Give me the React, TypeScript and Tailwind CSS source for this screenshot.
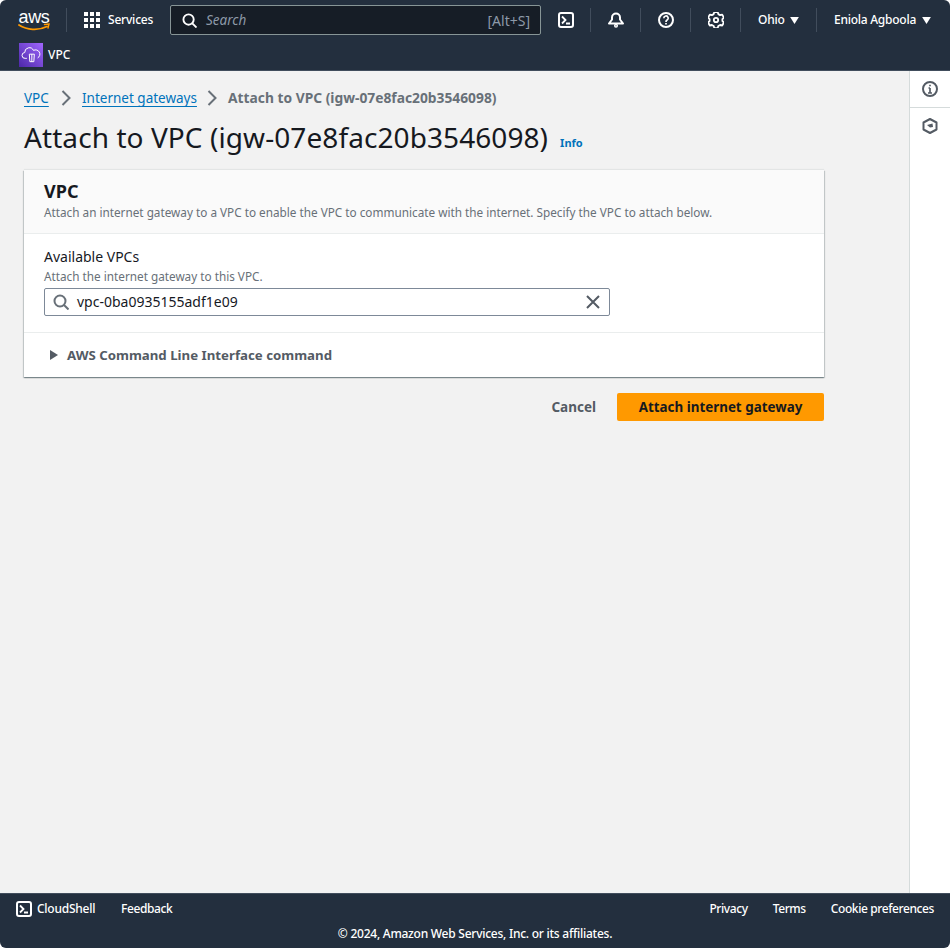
const font = "font-['Noto_Sans','Open_Sans',sans-serif]";

function Caret({ className = "" }: { className?: string }) {
  return (
    <svg viewBox="0 0 10 8" className={`w-[9px] h-[7px] ${className}`} fill="currentColor">
      <path d="M0 0h10L5 8z" />
    </svg>
  );
}

function Divider() {
  return <div className="w-px h-[24px] bg-[#414d5c]" />;
}

function ShellIcon({ size = 16 }: { size?: number }) {
  return (
    <svg width={size} height={size} viewBox="0 0 16 16" fill="none" stroke="currentColor" strokeWidth="2">
      <rect x="1" y="1" width="14" height="14" rx="2" />
      <path d="M4 4.500 7.500 8 4 11.500M8 11.500h4" strokeWidth="1.800" />
    </svg>
  );
}

function SearchIcon({ className = "" }: { className?: string }) {
  return (
    <svg viewBox="0 0 16 16" className={className} fill="none" stroke="currentColor" strokeWidth="2">
      <circle cx="7" cy="7" r="5.500" />
      <path d="m11 11 4.500 4.500" />
    </svg>
  );
}

function Crumb() {
  return (
    <svg viewBox="0 0 10 16" className="w-[10px] h-[16px] mx-[11px] text-[#687078]" fill="none" stroke="currentColor" strokeWidth="2">
      <path d="m1.500 1 7 7-7 7" />
    </svg>
  );
}

function Header() {
  return (
    <header className="h-[71px] shrink-0 bg-[#232f3e] text-white border-b border-[#414d5c]">
      <div className="h-[40px] flex items-center">
        <div className="ml-[18px] w-[32px] flex flex-col items-center">
          <span className="text-[18px] leading-[14px] font-['Liberation_Sans',sans-serif] tracking-[-0.3px]">aws</span>
          <svg viewBox="0 0 32 8" className="w-[32px] h-[8px] -mt-px" fill="none">
            <path d="M1 2c8 5 19 6 28 1.500" stroke="#ff9900" strokeWidth="1.800" strokeLinecap="round" />
            <path d="M26.500 1.500 31 1l-1 4" stroke="#ff9900" strokeWidth="1.400" strokeLinecap="round" />
          </svg>
        </div>
        <div className="ml-[16px]"><Divider /></div>
        <div className="ml-[17px] grid grid-cols-3 gap-[2px] w-[16px]">
          {Array.from({ length: 9 }).map((_, i) => (
            <span key={i} className="w-[4px] h-[4px] bg-white block" />
          ))}
        </div>
        <span className="ml-[8px] w-[45px] text-[12px] tracking-[-0.2px] font-medium whitespace-nowrap">Services</span>
        <div className="ml-[17px] w-[371px] h-[30px] flex items-center border border-[#879596] bg-[#161d26] rounded-[2px] pl-[11px] pr-[10px]">
          <SearchIcon className="w-[15px] h-[15px] text-white" />
          <span className="ml-[9px] text-[13.500px] italic text-[#8d99a8]">Search</span>
          <span className="ml-auto text-[14px] text-[#8d99a8]">[Alt+S]</span>
        </div>
        <div className="ml-[17px] w-[16px] h-[16px]"><ShellIcon /></div>
        <div className="ml-[16px]"><Divider /></div>
        <svg viewBox="0 0 16 16" className="ml-[17px] w-[16px] h-[16px]" fill="none" stroke="currentColor" strokeWidth="2">
          <path d="M1 11.500h14L12 7.500V5.500a4 4 0 0 0-8 0v2z" strokeLinejoin="round" />
          <circle cx="8" cy="13.800" r="1.300" strokeWidth="1.500" />
        </svg>
        <div className="ml-[16px]"><Divider /></div>
        <svg viewBox="0 0 16 16" className="ml-[17px] w-[16px] h-[16px]" fill="none" stroke="currentColor" strokeWidth="2">
          <circle cx="8" cy="8" r="7" />
          <path d="M5.800 6.200a2.200 2.200 0 1 1 3.300 1.900C8.400 8.500 8 9 8 10M8 11v1.500" strokeWidth="1.700" />
        </svg>
        <div className="ml-[16px]"><Divider /></div>
        <svg viewBox="0 0 16 16" className="ml-[17px] w-[16px] h-[16px]" fill="none" stroke="currentColor" strokeWidth="1.800">
          <path d="M6.300.900h3.400l.6 2.100 1.800 1 2.100-.5 1.700 3-1.500 1.500v1.900l1.500 1.500-1.700 3-2.100-.5-1.800 1-.6 2.100H6.300l-.6-2.100-1.800-1-2.100.5-1.700-3L1.600 9.900V8L.1 6.500l1.700-3 2.100.5 1.800-1z" strokeLinejoin="round" transform="translate(0 -.900)" />
          <circle cx="8" cy="8" r="2.200" />
        </svg>
        <div className="ml-[16px]"><Divider /></div>
        <span className="ml-[17px] w-[26px] text-[12px] tracking-[-0.2px] font-medium">Ohio</span>
        <Caret className="ml-[6px]" />
        <div className="ml-[17px]"><Divider /></div>
        <span className="ml-[17px] w-[82px] text-[12px] tracking-[-0.25px] font-medium whitespace-nowrap">Eniola Agboola</span>
        <Caret className="ml-[6px]" />
      </div>
      <div className="h-[30px] flex items-center pl-[19px]">
        <div className="w-[24px] h-[24px] bg-gradient-to-tr from-[#4d27a8] to-[#a166ff] flex items-center justify-center">
          <svg viewBox="0 0 24 24" className="w-[20px] h-[20px]" fill="none" stroke="white" strokeWidth="1.200">
            <path d="M7 16H5a3.500 3.500 0 0 1-.5-7A5.500 5.500 0 0 1 15 6.500 4.500 4.500 0 0 1 20 15.500" />
            <path d="M10 11h6l-.6 9h-4.800zM13 11v9" />
          </svg>
        </div>
        <span className="ml-[5px] text-[12px] font-medium">VPC</span>
      </div>
    </header>
  );
}

function Breadcrumbs() {
  return (
    <nav className="flex items-center h-[24px] text-[13.500px] mt-[15px]">
      <a className="w-[26px] text-[#0073bb] underline underline-offset-[3px]">VPC</a>
      <Crumb />
      <a className="w-[114px] whitespace-nowrap text-[#0073bb] underline underline-offset-[3px]">Internet gateways</a>
      <Crumb />
      <span className="font-bold text-[#687078] text-[13.800px]">Attach to VPC (igw-07e8fac20b3546098)</span>
    </nav>
  );
}

function Card() {
  return (
    <section className="w-[800px] mt-[13px] bg-white shadow-[0_1px_1px_0_rgba(0,28,36,0.3),1px_1px_1px_0_rgba(0,28,36,0.15),-1px_1px_1px_0_rgba(0,28,36,0.15),0_-1px_1px_0_rgba(0,28,36,0.06)]">
      <div className="h-[64px] bg-[#fafafa] border-b border-[#eaeded] px-[20px] pt-[9px]">
        <h2 className="text-[18px] leading-[24px] font-bold text-[#16191f]">VPC</h2>
        <p className="text-[11.750px] leading-[16px] mt-[1px] text-[#687078] whitespace-nowrap">
          Attach an internet gateway to a VPC to enable the VPC to communicate with the internet. Specify the VPC to attach below.
        </p>
      </div>
      <div className="h-[99px] border-b border-[#eaeded] px-[20px] pt-[13px]">
        <div className="text-[14px] leading-[20px] text-[#16191f]">Available VPCs</div>
        <div className="text-[11.750px] leading-[16px] text-[#687078] mt-[1px]">Attach the internet gateway to this VPC.</div>
        <div className="mt-[4px] w-[566px] h-[28px] border border-[#7d8998] rounded-[2px] flex items-center pl-[8px] pr-[8px]">
          <SearchIcon className="w-[16px] h-[16px] text-[#687078]" />
          <span className="ml-[8px] text-[14px] leading-[20px] text-[#16191f]">vpc-0ba0935155adf1e09</span>
          <svg viewBox="0 0 16 16" className="ml-auto w-[16px] h-[16px] text-[#545b64]" fill="none" stroke="currentColor" strokeWidth="2">
            <path d="m2 2 12 12M14 2 2 14" />
          </svg>
        </div>
      </div>
      <div className="h-[44px] flex items-center pl-[26px]">
        <svg viewBox="0 0 8 10" className="w-[8px] h-[10px] text-[#545b64]" fill="currentColor">
          <path d="M0 0v10l8-5z" />
        </svg>
        <span className="ml-[9px] mt-[2px] text-[13.250px] font-bold text-[#545b64]">AWS Command Line Interface command</span>
      </div>
    </section>
  );
}

function Footer() {
  return (
    <footer className="h-[55px] shrink-0 bg-[#232f3e] text-white text-[12px] tracking-[-0.25px] font-medium border-t border-[#414d5c]">
      <div className="h-[29px] flex items-center px-[16px] tracking-[-0.4px]">
        <ShellIcon />
        <span className="ml-[5px] w-[59px] whitespace-nowrap tracking-[-0.25px]">CloudShell</span>
        <span className="ml-[25px]">Feedback</span>
        <span className="ml-auto">Privacy</span>
        <span className="ml-[25px]">Terms</span>
        <span className="ml-[25px]">Cookie preferences</span>
      </div>
      <div className="text-center leading-[16px] pt-[3px]">© 2024, Amazon Web Services, Inc. or its affiliates.</div>
    </footer>
  );
}

export default function App() {
  return (
    <div className={`h-[948px] w-[950px] flex flex-col overflow-hidden rounded-[6px] bg-[#f2f2f2] ${font}`}>
      <Header />
      <div className="flex-1 flex min-h-0">
        <main className="flex-1 pl-[24px]">
          <Breadcrumbs />
          <div className="flex items-center mt-[7px] h-[40px]">
            <h1 className="text-[28px] leading-[36px] tracking-[0.08px] text-[#16191f]">Attach to VPC (igw-07e8fac20b3546098)</h1>
            <a className="ml-[12px] mt-[13px] text-[11px] font-bold text-[#0073bb]">Info</a>
          </div>
          <Card />
          <div className="w-[800px] flex items-center justify-end mt-[16px]">
            <span className="text-[13.500px] font-bold text-[#545b64]">Cancel</span>
            <button className="ml-[21px] w-[207px] h-[28px] bg-[#ff9900] rounded-[2px] text-[13.400px] font-bold text-[#16191f]">
              Attach internet gateway
            </button>
          </div>
        </main>
        <aside className="w-[41px] shrink-0 bg-white border-l border-[#d5dbdb]">
          <div className="h-[37px] border-b border-[#d5dbdb] flex items-center justify-center text-[#545b64]">
            <svg viewBox="0 0 16 16" className="w-[16px] h-[16px]" fill="none" stroke="currentColor" strokeWidth="2">
              <circle cx="8" cy="8" r="7" />
              <path d="M8 7v5M6 12h4M6.500 7H8M8 3.800v1.400" strokeWidth="1.700" />
            </svg>
          </div>
          <div className="h-[35px] flex items-center justify-center text-[#545b64]">
            <svg viewBox="0 0 16 16" className="w-[16px] h-[16px]" fill="none" stroke="currentColor" strokeWidth="2">
              <path d="M8 1 14.500 4.500v7L8 15 1.500 11.500v-7z" strokeLinejoin="round" />
              <path d="M5 7 10.500 5.500 11 9 8 9.500z" fill="currentColor" stroke="none" />
            </svg>
          </div>
        </aside>
      </div>
      <Footer />
    </div>
  );
}
